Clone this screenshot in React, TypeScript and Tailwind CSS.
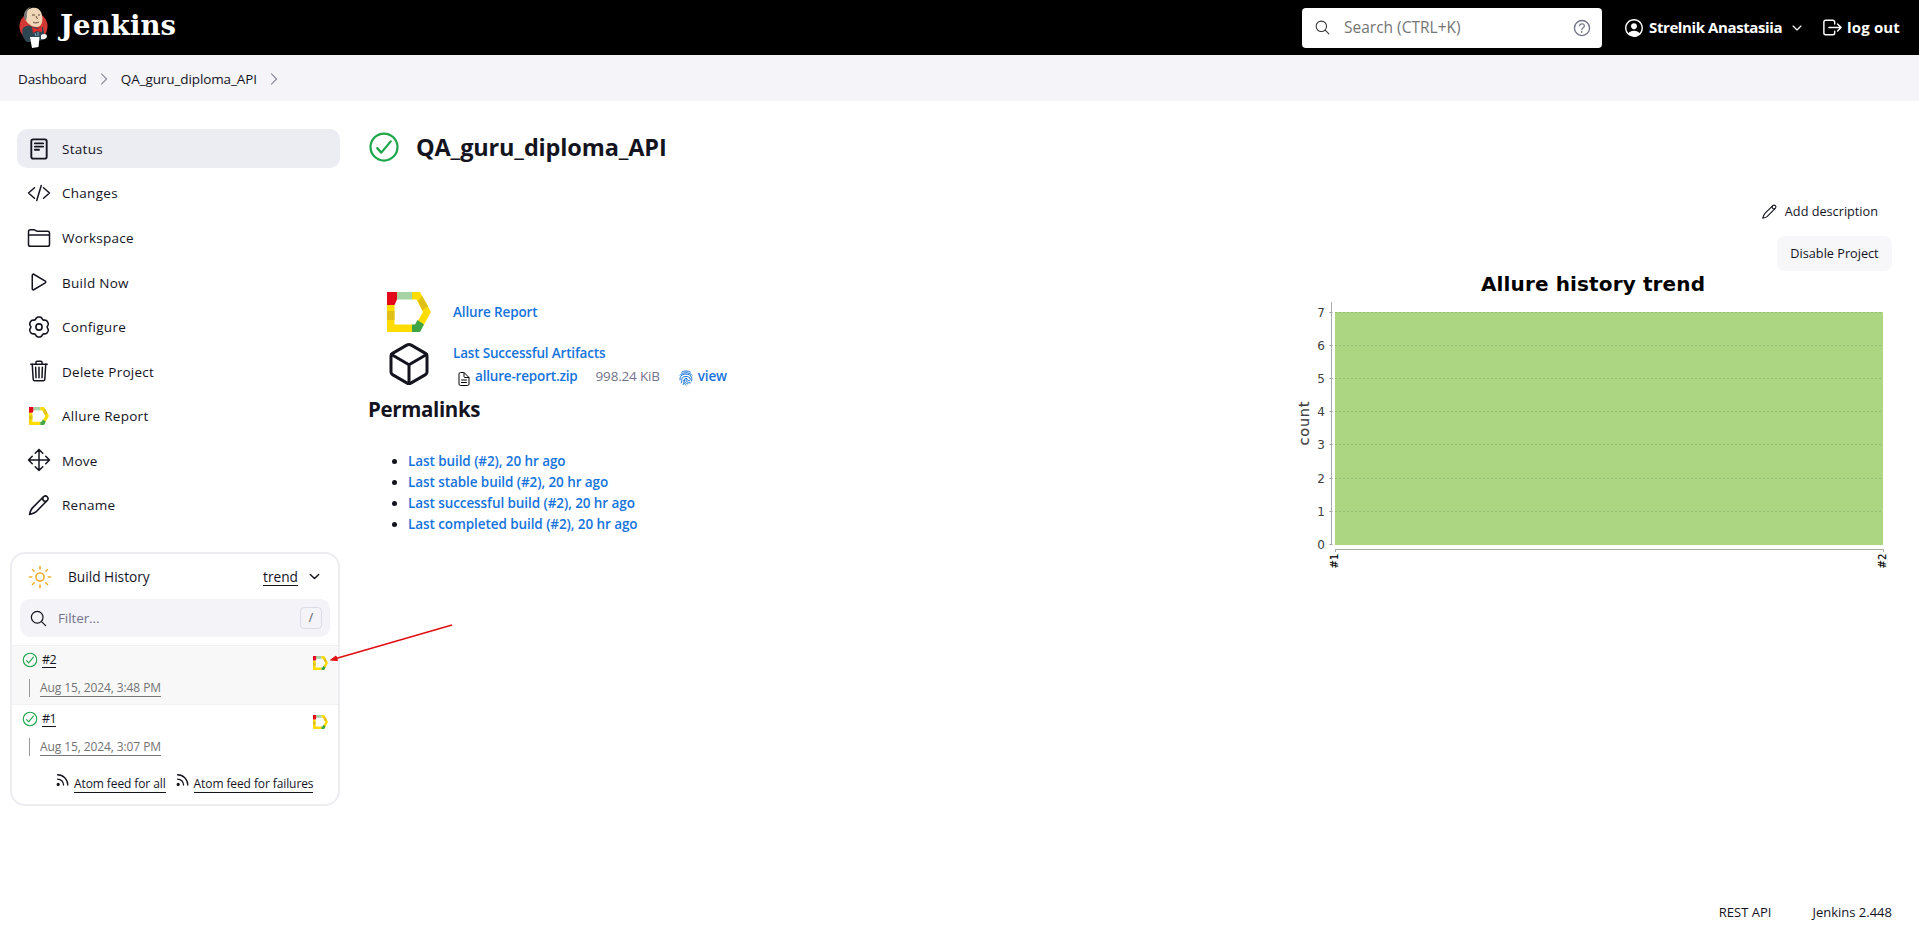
import React from "react";
import {
  IoCheckmarkCircleOutline,
  IoCodeSlashOutline,
  IoCubeOutline,
  IoDocumentTextOutline,
  IoFolderOutline,
  IoHelpCircleOutline,
  IoLogOutOutline,
  IoMoveOutline,
  IoPersonCircleOutline,
  IoPlayOutline,
  IoSearchOutline,
  IoSunnyOutline,
  IoTrashOutline,
} from "react-icons/io5";

type P = { className?: string };

const Svg = ({ className = "size-6", w = 32, children }: P & { w?: number; children: React.ReactNode }) => (
  <svg viewBox="0 0 512 512" className={`${className} block shrink-0`} fill="none" stroke="currentColor" strokeWidth={w} strokeLinecap="round" strokeLinejoin="round">
    {children}
  </svg>
);

const Pencil = ({ className, w = 34 }: P & { w?: number }) => (
  <Svg className={className} w={w}>
    <path d="M356 76 112 322C84 352 62 420 54 458c40-8 106-26 136-54l246-248a57 57 0 0 0-80-80z" />
    <path d="M338 100c-14 50 30 90 74 76" />
  </Svg>
);
const Chevron = ({ className, w = 40 }: P & { w?: number }) => (
  <Svg className={className} w={w}>
    <path d="m112 184 144 144 144-144" />
  </Svg>
);
const ChevronRight = ({ className }: P) => (
  <Svg className={className} w={34}>
    <path d="m184 112 144 144-144 144" />
  </Svg>
);
const Fingerprint = ({ className }: P) => (
  <Svg className={className} w={32}>
    <path d="M120 66c80-50 192-50 272 0M64 168c70-110 314-110 384 0M66 318c-20-110 50-186 190-186s216 84 178 220M104 414c26-60 16-90 18-134 4-100 264-100 270 10 4 70-70 76-82 20-10-60-108-60-108 4 0 70 50 110 110 134M166 466c28-50 24-90 24-140M396 414c-80 10-140-40-140-110M256 490c-20-20-40-44-50-70" />
  </Svg>
);
const Allure = ({ className }: P) => (
  <svg viewBox="0 0 44 40" className={`${className} block shrink-0`} preserveAspectRatio="none">
    <path d="M0 13h7.500v19.500H25V40H0z" fill="#ffdc00" />
    <path d="M0 19h7.500v9H0z" fill="#e0c016" />
    <path d="M0 0h10v7.500l-2.500 5.500H0z" fill="#e3091a" />
    <path d="M10 0h15v7.500H10z" fill="#a5d3a4" />
    <path d="M25 0h8l11 20-7.500 13.500-6-4L36 20l-6.500-12.500H25z" fill="#ffdc00" />
    <path d="m35 4 6 10-5.500 4.500L31 9z" fill="#e0c016" />
    <path d="M30.500 28 37 32.500 33 40h-8v-7.500h3z" fill="#3ea444" />
  </svg>
);
const Rss = ({ className }: P) => (
  <Svg className={className} w={44}>
    <path d="M86 60c194 0 350 156 350 352M86 206c115 0 206 91 206 206" />
    <circle cx="108" cy="390" r="32" fill="currentColor" />
  </Svg>
);

// Six-lobed gear outline
const gearPoints = Array.from({ length: 120 }, (_, i) => {
  const a = (i / 120) * Math.PI * 2;
  const r = 198 + 19 * Math.cos(6 * a) - 5 * Math.cos(12 * a);
  return `${(256 + r * Math.sin(a)).toFixed(1)},${(256 - r * Math.cos(a)).toFixed(1)}`;
}).join(" ");
const Gear = () => (
  <Svg w={34}>
    <polygon points={gearPoints} />
    <circle cx="256" cy="256" r="66" />
  </Svg>
);

const nav: { label: string; icon: React.ReactNode }[] = [
  {
    label: "Status",
    icon: (
      <Svg w={40}>
        <rect x="92" y="50" width="328" height="412" rx="40" />
        <path d="M168 136h176M168 204h176M168 272h88" />
      </Svg>
    ),
  },
  { label: "Changes", icon: <IoCodeSlashOutline className="size-6" /> },
  { label: "Workspace", icon: <IoFolderOutline className="size-6" /> },
  { label: "Build Now", icon: <IoPlayOutline className="size-6" /> },
  { label: "Configure", icon: <Gear /> },
  { label: "Delete Project", icon: <IoTrashOutline className="size-6" /> },
  { label: "Allure Report", icon: <Allure className="ml-[2px] h-[18px] w-5" /> },
  { label: "Move", icon: <IoMoveOutline className="size-6" /> },
  { label: "Rename", icon: <Pencil className="size-6" /> },
];

const Mascot = () => (
  <svg viewBox="0 0 32 42" className="mt-[-1px] h-[42px] w-8 shrink-0">
    <circle cx="15.500" cy="20.500" r="14" fill="#d33833" />
    <path d="M5 22c3-2 5-3 7-2l8 2 5-1 2 12-9 3H9c-4-3-6-9-4-14z" fill="#2e4552" />
    <path d="M7 8c2-7 13-9 16-2 2 5 2 11-1 14-3 2-8 1-11-2C8 16 6 12 7 8z" fill="#f0d6b7" />
    <path d="M6.500 13C4.500 7 8 2 13 1c-3.500 3-4.500 5-4 9l-1 5z" fill="#777" />
    <path d="M14 9h3M20 9h2M18 10l1.500 3M15 16c2 1.500 4 1 6 0" stroke="#5b4638" strokeWidth="1" fill="none" />
    <path d="m14 21 5 2 5-2v5l-5-1-4 2z" fill="#e02a2a" />
    <path d="M12 31h9.500l-1 10-6.500 1z" fill="#fff" />
    <path d="M23 29c3-2 6-1 6 1s-2 4-6 3z" fill="#f3f3f3" />
    <path d="m17 27 1 3M20 26v4" stroke="#81b0c4" strokeWidth="1" />
  </svg>
);

const Header = () => (
  <header className="flex h-[55px] items-center bg-black pr-[19px] pl-[18px] text-white">
    <Mascot />
    <span className="mt-[-4px] ml-[10px] font-['DejaVu_Serif',serif] text-[27.500px] leading-none font-bold tracking-[0.1px]">Jenkins</span>
    <div className="ml-auto flex h-10 w-[300px] items-center rounded bg-white pr-[9px] pl-[12px]">
      <IoSearchOutline className="size-[17px] text-[#333]" />
      <span className="ml-[13px] text-[15.500px] text-[#757575]">Search (CTRL+K)</span>
      <IoHelpCircleOutline className="ml-auto size-[22px] text-[#73738c]" />
    </div>
    <div className="ml-[21px] flex items-center font-bold">
      <IoPersonCircleOutline className="size-[22px]" />
      <span className="ml-[4px] text-[15px] tracking-[-0.4px]">Strelnik Anastasiia</span>
      <Chevron className="ml-[8px] size-[14px]" w={44} />
    </div>
    <div className="ml-[17px] flex items-center font-bold">
      <IoLogOutOutline className="size-[23px]" />
      <span className="ml-[3px] text-[15px] tracking-[0.15px]">log out</span>
    </div>
  </header>
);

const Breadcrumbs = () => (
  <nav className="flex h-[46px] items-center bg-[#f5f5f9] pt-px pl-[18px] text-[13.500px] tracking-[-0.1px]">
    <span className="pt-px">Dashboard</span>
    <ChevronRight className="mx-[8px] size-[18px] text-[#8b8b9c]" />
    <span className="pt-px">QA_guru_diploma_API</span>
    <ChevronRight className="mx-[8px] size-[18px] text-[#8b8b9c]" />
  </nav>
);

const Build = ({ n, date, active }: { n: string; date: string; active?: boolean }) => (
  <div className={`flex justify-between pr-[10px] pl-[9px] ${active ? "h-[60px] border-y border-[#f1f1f4] bg-[#f8f8f8]" : "h-[59px]"}`}>
    <div>
      <div className="flex items-center gap-[3px] pt-[5px]">
        <IoCheckmarkCircleOutline className="size-[18px] text-[#1ea64b]" />
        <span className="border-b border-[#14141f] text-[12.500px] leading-[15px] tracking-[-0.5px]">{n}</span>
      </div>
      <div className="mt-[10px] ml-[8px] flex items-start border-l border-[#999]">
        <span className="ml-[10px] border-b border-[#777] text-[12px] leading-[17px] tracking-[-0.1px] text-[#737373]">{date}</span>
      </div>
    </div>
    <Allure className="mt-[10px] h-[14px] w-[15px]" />
  </div>
);

const BuildHistory = () => (
  <section className="mt-[28px] h-[254px] w-[330px] overflow-hidden rounded-[15px] border-2 border-[#ececf1]">
    <div className="flex h-[45px] items-center pr-[16px] pl-[15px] text-[13.700px]">
      <IoSunnyOutline className="size-[26px] text-[#f2ae2e]" />
      <span className="ml-[15px]">Build History</span>
      <span className="ml-auto border-b border-[#14141f] leading-[17px]">trend</span>
      <Chevron className="ml-[9px] size-[15px]" w={48} />
    </div>
    <div className="mx-[8px] flex h-[38px] items-center rounded-[10px] bg-[#f3f3f8] pr-[8px] pl-[9px]">
      <IoSearchOutline className="size-[19px]" />
      <span className="ml-[10px] text-[13.500px] font-medium tracking-[-0.1px] text-[#73738c]">Filter...</span>
      <span className="ml-auto flex h-[22px] w-[22px] items-center justify-center rounded border border-[#dcdce6] text-[12px] text-[#555]">/</span>
    </div>
    <div className="mt-[8px]">
      <Build n="#2" date="Aug 15, 2024, 3:48 PM" active />
      <Build n="#1" date="Aug 15, 2024, 3:07 PM" />
    </div>
    <div className="mt-[9px] flex pl-[43px] text-[12px] tracking-[-0.1px] whitespace-nowrap">
      <Rss className="size-[15px]" />
      <span className="mt-[3px] ml-[4px] border-b border-[#14141f] leading-[16px]">Atom feed for all</span>
      <Rss className="ml-[9px] size-[15px]" />
      <span className="mt-[3px] ml-[4px] border-b border-[#14141f] leading-[16px]">Atom feed for failures</span>
    </div>
  </section>
);

const Chart = () => (
  <svg viewBox="1290 265 600 310" className="block h-[310px] w-[600px]" fontFamily="DejaVu Sans, sans-serif">
    <text x="1593" y="290.500" fontSize="20" fontWeight="700" textAnchor="middle" textLength="224">Allure history trend</text>
    <rect x="1335" y="312" width="548" height="233" fill="#add683" />
    {[0, 1, 2, 3, 4, 5, 6, 7].map((v) => {
      const y = 544.5 - Math.round(v * 33.2);
      return (
        <g key={v}>
          <path d={`M1329.500 ${y}h3`} stroke="#999" />
          {v > 0 && <path d={`M1335 ${y}h548`} stroke="#97bc73" strokeDasharray="2 2" />}
          <text x="1325" y={y + 4.5} fontSize="12" fill="#404040" textAnchor="end">{v}</text>
        </g>
      );
    })}
    <path d="M1331.500 302v243M1335 549.500h549M1335.500 549v3M1883.500 549v3" stroke="#aaa" fill="none" />
    <text transform="translate(1309 423.500) rotate(-90)" fontSize="14.500" fill="#404040" stroke="#404040" strokeWidth="0.150" textAnchor="middle" textLength="44">count</text>
    <text transform="translate(1338 568.500) rotate(-90)" fontSize="10" stroke="#000" strokeWidth="0.150">#1</text>
    <text transform="translate(1886 568.500) rotate(-90)" fontSize="10" stroke="#000" strokeWidth="0.150">#2</text>
  </svg>
);

const links = ["Last build (#2), 20 hr ago", "Last stable build (#2), 20 hr ago", "Last successful build (#2), 20 hr ago", "Last completed build (#2), 20 hr ago"];

export default function App() {
  return (
    <div className="flex h-[939px] w-[1919px] flex-col overflow-hidden bg-white font-['Open_Sans','Noto_Sans',sans-serif] text-[14px] text-[#14141f]">
      <Header />
      <Breadcrumbs />
      <div className="relative flex h-[770px]">
        <aside className="w-[340px] shrink-0 pt-[28px] pl-[10px]">
          <div className="ml-[7px] flex flex-col gap-[5.550px]">
            {nav.map(({ label, icon }, i) => (
              <div key={label} className={`flex h-[39px] w-[323px] items-center rounded-[10px] pl-[10px] ${i === 0 ? "bg-[#ececf3]" : ""}`}>
                <span className="w-6">{icon}</span>
                <span className="ml-[11px] pt-px text-[13.500px] tracking-[0.28px]">{label}</span>
              </div>
            ))}
          </div>
          <BuildHistory />
        </aside>
        <main className="flex grow justify-between pr-[27px] pl-[28px]">
          <div>
            <div className="mt-[28px] flex h-[36px] items-center">
              <IoCheckmarkCircleOutline className="ml-[-2px] size-[36px] text-[#1ea64b]" />
              <h1 className="ml-[14px] pt-[2px] text-[23.500px] font-bold tracking-[-0.15px]">QA_guru_diploma_API</h1>
            </div>
            <div className="mt-[127px] flex items-center pl-[19px] font-semibold text-[#1573dc]">
              <Allure className="h-10 w-[44px]" />
              <span className="ml-[22px] text-[13.500px] tracking-[-0.15px]">Allure Report</span>
            </div>
            <div className="mt-[8px] flex pl-[17px]">
              <IoCubeOutline className="size-[48px]" />
              <div className="ml-[20px] text-[13.500px] font-semibold tracking-[-0.18px] text-[#1573dc]">
                <div className="mt-[3px] leading-[20px]">Last Successful Artifacts</div>
                <div className="mt-[3px] flex h-5 items-center">
                  <IoDocumentTextOutline className="mt-[5px] ml-[3px] size-[16px] text-black" />
                  <span className="ml-[3px]">allure-report.zip</span>
                  <span className="ml-[18px] font-normal text-[#73738c]">998.24 KiB</span>
                  <Fingerprint className="mt-[3px] ml-[18px] size-4" />
                  <span className="ml-[4px]">view</span>
                </div>
              </div>
            </div>
            <h2 className="mt-[7px] text-[20.500px] leading-[28px] font-bold tracking-[-0.350px]">Permalinks</h2>
            <ul className="mt-[28px] list-disc pl-[40px] text-[13.500px] leading-[21px] font-semibold tracking-[-0.080px]">
              {links.map((l) => (
                <li key={l}>
                  <span className="text-[#1573dc]">{l}</span>
                </li>
              ))}
            </ul>
          </div>
          <div className="flex flex-col items-end text-[12.700px]">
            <div className="mt-[100px] mr-[14px] flex items-center gap-[7px] leading-[20px]">
              <Pencil className="size-[17px]" />
              Add description
            </div>
            <div className="mt-[15px] flex h-[35px] w-[115px] items-center justify-center rounded-[8px] bg-[#f7f7fa]">Disable Project</div>
            <div className="mt-[-6px] mr-[2px]">
              <Chart />
            </div>
          </div>
        </main>
        <svg className="absolute top-[519px] left-[328px] h-[44px] w-[128px]" viewBox="328 620 128 44">
          <path d="M452 625 336 658.500" stroke="#e01010" strokeWidth="1.600" />
          <path d="m330.500 660 5.500-4 1.500 4.600z" fill="#e01010" stroke="#e01010" />
        </svg>
      </div>
      <footer className="mt-[32px] flex justify-end pr-[27px] text-[13px]">
        <span>REST API</span>
        <span className="ml-[41px]">Jenkins 2.448</span>
      </footer>
    </div>
  );
}
